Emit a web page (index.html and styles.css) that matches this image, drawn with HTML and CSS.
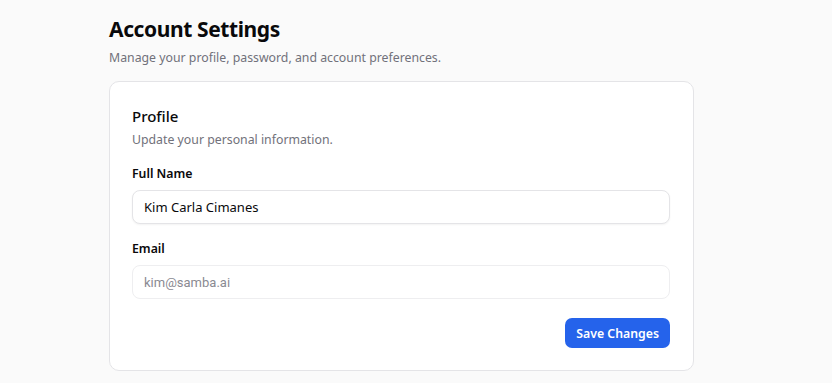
FILE: index.html
```html
<!DOCTYPE html>
<html lang="en">
<head>
    <meta charset="UTF-8">
    <meta name="viewport" content="width=device-width, initial-scale=1.0">
    <title>Account Settings</title>
    <link rel="stylesheet" href="styles.css">
</head>
<body>
    <div class="page">
        <h1 class="title">Account Settings</h1>
        <p class="subtitle">Manage your profile, password, and account preferences.</p>

        <div class="card">
            <h2 class="card-title">Profile</h2>
            <p class="card-desc">Update your personal information.</p>

            <form class="form">
                <div class="field">
                    <label for="fullName">Full Name</label>
                    <input id="fullName" type="text" value="Kim Carla Cimanes">
                </div>
                <div class="field">
                    <label for="email">Email</label>
                    <input id="email" type="email" class="muted" value="kim@samba.ai" disabled>
                </div>
                <div class="actions">
                    <button type="button" class="btn-primary">Save Changes</button>
                </div>
            </form>
        </div>
    </div>
</body>
</html>
```

FILE: styles.css
```css
body {
    margin: 0;
    background-color: #fafafa;
    font-family: "Noto Sans", "Open Sans", sans-serif;
    color: #09090b;
}

.page {
    width: 585px;
    margin-left: 109px;
    padding-top: 13px;
}

.title {
    font-size: 21px;
    font-weight: 700;
    margin: 0;
    line-height: 32px;
    letter-spacing: -0.4px;
}

.subtitle {
    font-size: 12.3px;
    color: #71717a;
    margin: 4px 0 14px;
    line-height: 18px;
}

.card {
    background-color: #ffffff;
    border: 1px solid #e4e4e7;
    border-radius: 10px;
    padding: 22px 23px 22px 22px;
}

.card-title {
    font-size: 15px;
    font-weight: 500;
    margin: 0;
    line-height: 24px;
}

.card-desc {
    font-size: 12.3px;
    color: #71717a;
    margin: 3px 0 0;
    line-height: 18px;
}

.form {
    margin-top: 16px;
}

.field {
    display: flex;
    flex-direction: column;
    gap: 7px;
    margin-bottom: 16px;
}

.field label {
    font-size: 12.3px;
    font-weight: 600;
    line-height: 18px;
}

.field input {
    height: 34px;
    box-sizing: border-box;
    border: 1px solid #e4e4e7;
    border-radius: 8px;
    padding: 0 11px;
    font-family: inherit;
    font-size: 13px;
    color: #09090b;
    background-color: #ffffff;
    box-shadow: 0 1px 2px rgba(0, 0, 0, 0.05);
}

.field input.muted {
    font-family: Roboto, sans-serif;
    color: #8a8a92;
    border-color: #eeeef0;
    box-shadow: none;
}

.actions {
    display: flex;
    justify-content: flex-end;
    margin-top: 19px;
}

.btn-primary {
    background-color: #2563eb;
    color: #ffffff;
    border: none;
    border-radius: 7px;
    height: 30px;
    padding: 0 11px;
    font-family: inherit;
    font-size: 12.3px;
    font-weight: 600;
}
```
